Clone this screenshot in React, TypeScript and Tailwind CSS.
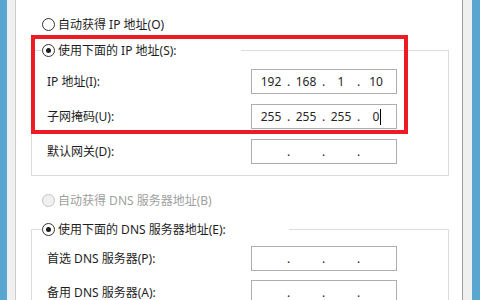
import { Fragment } from "react";

function Radio({ checked = false, disabled = false }: { checked?: boolean; disabled?: boolean }) {
  return (
    <span
      className={
        disabled
          ? "flex h-[13px] w-[13px] shrink-0 items-center justify-center rounded-full border border-[#c4c4c4] bg-[#f0f0f0]"
          : "flex h-[13px] w-[13px] shrink-0 items-center justify-center rounded-full border border-[#333333] bg-white"
      }
    >
      {checked && <span className="h-[5px] w-[5px] rounded-full bg-[#1b1b1b]" />}
    </span>
  );
}

function RadioRow({
  label,
  checked = false,
  disabled = false,
}: {
  label: string;
  checked?: boolean;
  disabled?: boolean;
}) {
  return (
    <div className="flex h-[17px] items-center gap-[3px]">
      <Radio checked={checked} disabled={disabled} />
      <span className={disabled ? "whitespace-nowrap text-[#a0a0a0]" : "whitespace-nowrap"}>{label}</span>
    </div>
  );
}

function IpBox({ values, cursor = false }: { values: string[]; cursor?: boolean }) {
  return (
    <div className="flex h-[25px] w-[146px] shrink-0 items-center border border-[#abadb3] bg-white pl-[3px] text-[#262626]">
      {values.map((v, i) => (
        <Fragment key={i}>
          {i > 0 && <span className="w-[3px] text-center">.</span>}
          <span className="flex w-[32px] justify-center">
            <span className="relative inline-block">
              {v}
              {cursor && i === 3 && (
                <span className="absolute left-full top-0 ml-[1px] h-[16px] w-px bg-black" />
              )}
            </span>
          </span>
        </Fragment>
      ))}
    </div>
  );
}

function Row({ label, values, cursor = false }: { label: string; values: string[]; cursor?: boolean }) {
  return (
    <div className="flex h-[25px] items-center">
      <span className="w-[204px] shrink-0 whitespace-nowrap">{label}</span>
      <IpBox values={values} cursor={cursor} />
    </div>
  );
}

const empty = ["", "", "", ""];

export default function App() {
  return (
    <div className="relative flex h-[300px] w-[480px] overflow-hidden bg-white font-['Noto_Sans','Noto_Sans_CJK_SC',sans-serif] text-[12px] leading-[16px] text-[#1e1e1e]">
      <div className="w-[7px] shrink-0 bg-[#59a7d1]" />
      <div className="w-[9px] shrink-0 border-r border-[#cdcdcd] bg-[#f0f0f0]" />

      <main className="flex w-[446px] shrink-0 flex-col pt-[16px]">
        <div className="ml-[26px]">
          <RadioRow label="自动获得 IP 地址(O)" />
        </div>

        <fieldset className="ml-[15px] mr-[13px] mt-[9px] border border-[#dcdcdc] pb-[11px]">
          <legend className="ml-[10px] w-[199px] bg-white">
            <RadioRow checked label="使用下面的 IP 地址(S):" />
          </legend>
          <div className="flex flex-col gap-[10px] pl-[15px] pt-[10px]">
            <Row label="IP 地址(I):" values={["192", "168", "1", "10"]} />
            <Row label="子网掩码(U):" values={["255", "255", "255", "0"]} cursor />
            <Row label="默认网关(D):" values={empty} />
          </div>
        </fieldset>

        <div className="ml-[26px] mt-[16px]">
          <RadioRow disabled label="自动获得 DNS 服务器地址(B)" />
        </div>

        <fieldset className="ml-[15px] mr-[13px] mt-[12px] border border-[#dcdcdc] pb-[11px]">
          <legend className="ml-[10px] w-[247px] bg-white">
            <RadioRow checked label="使用下面的 DNS 服务器地址(E):" />
          </legend>
          <div className="flex flex-col gap-[9px] pl-[15px] pt-[8px]">
            <Row label="首选 DNS 服务器(P):" values={empty} />
            <Row label="备用 DNS 服务器(A):" values={empty} />
          </div>
        </fieldset>
      </main>

      <div className="w-[10px] shrink-0 border-l border-[#a0a0a0] bg-[#f0f0f0]" />
      <div className="w-[8px] shrink-0 bg-[#59a7d1]" />

      <div className="absolute left-[31px] top-[35px] h-[99px] w-[377px] border-4 border-[#ed1c24]" />
    </div>
  );
}
